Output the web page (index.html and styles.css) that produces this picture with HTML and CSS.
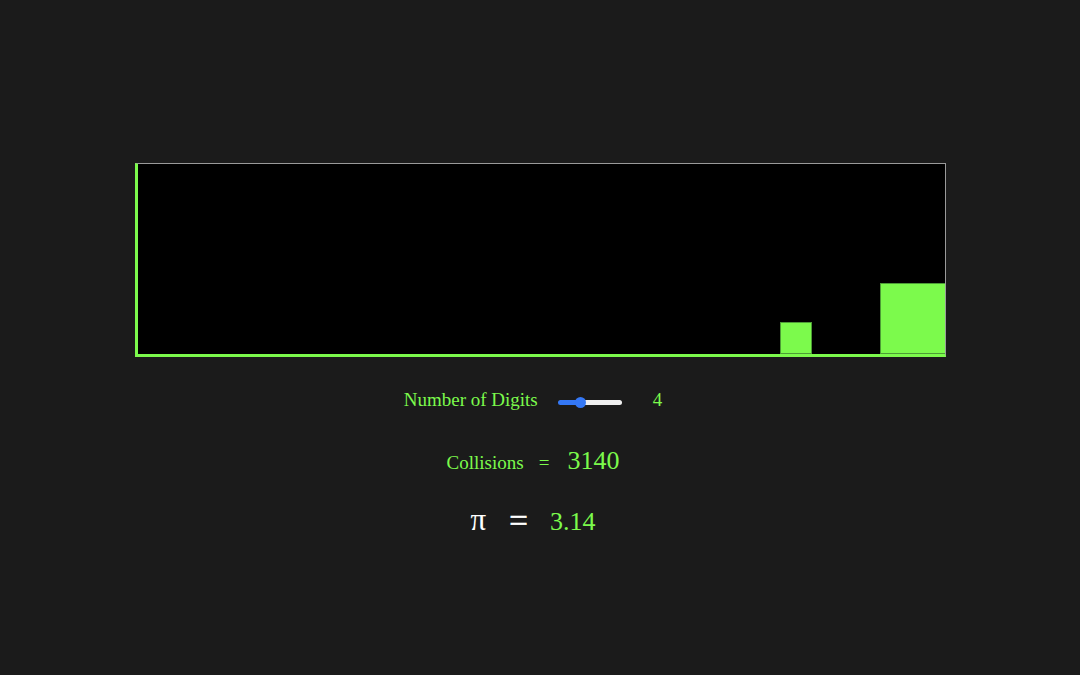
FILE: index.html
```html
<!DOCTYPE html>
<html>
<head>
<meta charset="utf-8">
<link rel="stylesheet" href="styles.css">
</head>
<body>
<div class="page">
  <div class="sim">
    <div class="block block-small"></div>
    <div class="block block-large"></div>
  </div>
  <div class="controls">
    <div class="row row-digits">
      <span class="label">Number of Digits</span>
      <input class="slider" type="range" min="1" max="10" value="4">
      <span class="digits-value">4</span>
    </div>
    <div class="row row-collisions">
      <span class="label">Collisions</span>
      <span class="eq-small">=</span>
      <span class="big-value">3140</span>
    </div>
    <div class="row row-pi">
      <span class="pi">π</span>
      <span class="eq-big">=</span>
      <span class="big-value">3.14</span>
    </div>
  </div>
</div>
</body>
</html>
```
FILE: styles.css
```css
html, body {
  margin: 0;
  padding: 0;
  background: #1b1b1b;
}
body {
  font-family: "Liberation Serif", "Times New Roman", serif;
  color: #7cfa4c;
  width: 1080px;
  height: 675px;
  overflow: hidden;
}
.page {
  display: flex;
  flex-direction: column;
  align-items: center;
  padding-top: 163px;
}
.sim {
  position: relative;
  width: 807px;
  height: 190px;
  background: #000;
  border-top: 1px solid #9a9a9a;
  border-right: 1px solid #9a9a9a;
  border-left: 3px solid #7cfa4c;
  border-bottom: 3px solid #7cfa4c;
  overflow: hidden;
  box-sizing: content-box;
  margin-left: 1px;
}
.block {
  position: absolute;
  bottom: 0;
  background: #7cfa4c;
  border: 1px solid #4d9c36;
  box-sizing: border-box;
}
.block-small {
  left: 642px;
  width: 32px;
  height: 32px;
}
.block-large {
  left: 742px;
  width: 71px;
  height: 71px;
}
.controls {
  display: flex;
  flex-direction: column;
  align-items: center;
  padding-right: 14px;
}
.row {
  display: flex;
}
.row-digits {
  margin-top: 31px;
  align-items: center;
  height: 24px;
  line-height: 24px;
  font-size: 19px;
}
.slider {
  -webkit-appearance: none;
  appearance: none;
  width: 64px;
  height: 5px;
  margin: 4px 0 0 20px;
  padding: 0;
  border-radius: 3px;
  background: linear-gradient(to right, #3478f6 0, #3478f6 37%, #efefef 37%, #efefef 100%);
  outline: none;
}
.slider::-webkit-slider-thumb {
  -webkit-appearance: none;
  appearance: none;
  width: 11px;
  height: 11px;
  border-radius: 50%;
  background: #3478f6;
  border: none;
}
.digits-value {
  margin-left: 31px;
}
.row-collisions {
  margin-top: 34px;
  align-items: baseline;
  height: 30px;
  line-height: 30px;
}
.row-collisions .label {
  font-size: 19px;
}
.eq-small {
  font-size: 19px;
  margin-left: 15px;
}
.big-value {
  font-size: 26px;
}
.row-collisions .big-value {
  margin-left: 18px;
}
.row-pi {
  margin-top: 26px;
  align-items: baseline;
  height: 34px;
  line-height: 34px;
}
.pi {
  color: #ffffff;
  font-size: 31px;
}
.eq-big {
  color: #ffffff;
  font-size: 33px;
  margin-left: 23px;
  -webkit-text-stroke: 0.6px #ffffff;
  position: relative;
  top: 2px;
}
.row-pi .big-value {
  margin-left: 22px;
}
```
